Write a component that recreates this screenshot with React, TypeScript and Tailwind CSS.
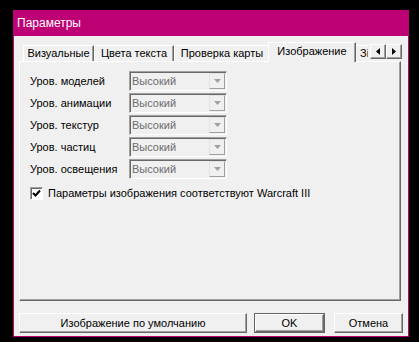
import React from 'react';

const font = { fontFamily: '"Liberation Sans", Arial, sans-serif' };

const rows = [
  'Уров. моделей',
  'Уров. анимации',
  'Уров. текстур',
  'Уров. частиц',
  'Уров. освещения',
];

function Tab({ label, width, active }: { label: string; width: string; active?: boolean }) {
  if (active) {
    return (
      <div className={`${width} relative z-10 -mx-[2px] -mb-px flex h-[20px] items-start justify-center border-l border-t border-r border-l-white border-t-white border-r-[#696969] bg-[#f0f0f0] pt-px leading-[14px] shadow-[inset_-1px_0_0_#a0a0a0]`}>
        {label}
      </div>
    );
  }
  return (
    <div className={`${width} flex h-[16px] items-start justify-center border-l border-t border-r border-l-white border-t-white border-r-[#696969] leading-[14px] shadow-[inset_-1px_0_0_#a0a0a0]`}>
      {label}
    </div>
  );
}

function ScrollArrow({ dir }: { dir: 'left' | 'right' }) {
  return (
    <div className="flex h-[15px] w-[16px] items-center justify-center border border-l-white border-t-white border-r-[#696969] border-b-[#696969] bg-[#f0f0f0] shadow-[inset_-1px_-1px_0_#a0a0a0]">
      <svg width="4" height="7" viewBox="0 0 4 7">
        {dir === 'left' ? <path d="M4 0 L0 3.5 L4 7 Z" fill="#000" /> : <path d="M0 0 L4 3.5 L0 7 Z" fill="#000" />}
      </svg>
    </div>
  );
}

function Dropdown() {
  return (
    <div className="flex h-[20px] w-[98px] border border-l-[#a0a0a0] border-t-[#a0a0a0] border-r-white border-b-white bg-[#f0f0f0] shadow-[inset_1px_1px_0_#696969]">
      <div className="flex flex-1 items-center pl-[2px] pt-px text-[#6d6d6d]">Высокий</div>
      <div className="my-px mr-px flex w-[16px] items-center justify-center border border-l-[#e3e3e3] border-t-[#e3e3e3] border-r-[#a0a0a0] border-b-[#a0a0a0] bg-[#f0f0f0]">
        <svg width="7" height="4" viewBox="0 0 7 4">
          <path d="M0 0 H7 L3.5 4 Z" fill="#a0a0a0" />
        </svg>
      </div>
    </div>
  );
}

function Button({ label, width, isDefault }: { label: string; width: string; isDefault?: boolean }) {
  return (
    <div className={`${width} h-[20px] ${isDefault ? 'border border-[#646464]' : ''}`}>
      <div className="flex h-full items-center justify-center border border-l-white border-t-white border-r-[#696969] border-b-[#696969] bg-[#f0f0f0] shadow-[inset_-1px_-1px_0_#a0a0a0]">
        {label}
      </div>
    </div>
  );
}

export default function App() {
  return (
    <div className="h-[342px] w-[419px] overflow-hidden bg-black pl-[13px] pt-[10px] text-[11px] text-black" style={font}>
      <div className="flex h-[327px] w-[396px] flex-col bg-[#bd0074]">
        {/* Title bar */}
        <div className="flex h-[26px] shrink-0 items-center pl-[4px] text-[12px] text-white">Параметры</div>

        {/* Client area */}
        <div className="mx-px mb-px flex flex-1 flex-col bg-[#f0f0f0] px-[5px]">
          {/* Tabs */}
          <div className="relative mt-[6px] flex h-[19px] items-end pl-[4px]">
            <Tab label="Визуальные" width="w-[71px]" />
            <Tab label="Цвета текста" width="w-[80px]" />
            <Tab label="Проверка карты" width="w-[96px]" />
            <Tab label="Изображение" width="w-[88px]" active />
            <div className="flex h-[16px] w-[14px] items-start overflow-hidden border-l border-t border-l-white border-t-white pl-[5px] leading-[14px]">
              Зі
            </div>
            <div className="absolute right-px top-[2px] flex">
              <ScrollArrow dir="left" />
              <ScrollArrow dir="right" />
            </div>
          </div>

          {/* Panel */}
          <div className="flex h-[240px] w-[382px] flex-col border border-l-white border-t-white border-r-[#696969] border-b-[#696969] pl-[10px] pt-[9px] shadow-[inset_-1px_-1px_0_#a0a0a0]">
            <div className="flex flex-col gap-[2px]">
              {rows.map((r) => (
                <div key={r} className="flex items-center">
                  <div className="w-[99px]">{r}</div>
                  <Dropdown />
                </div>
              ))}
            </div>
            <div className="mt-[6px] flex items-center gap-[5px]">
              <div className="flex h-[13px] w-[13px] items-center justify-center border border-l-[#a0a0a0] border-t-[#a0a0a0] border-r-white border-b-white bg-white shadow-[inset_1px_1px_0_#696969]">
                <svg width="9" height="9" viewBox="0 0 9 9">
                  <path d="M1 4 L3.5 6.5 L8 1.5" stroke="#000" strokeWidth="2" fill="none" />
                </svg>
              </div>
              <span>Параметры изображения соответствуют Warcraft III</span>
            </div>
          </div>

          {/* Buttons */}
          <div className="mt-[12px] flex">
            <Button label="Изображение по умолчанию" width="w-[229px]" />
            <div className="ml-[7px]">
              <Button label="OK" width="w-[71px]" isDefault />
            </div>
            <div className="ml-[9px]">
              <Button label="Отмена" width="w-[69px]" />
            </div>
          </div>
        </div>
      </div>
    </div>
  );
}
